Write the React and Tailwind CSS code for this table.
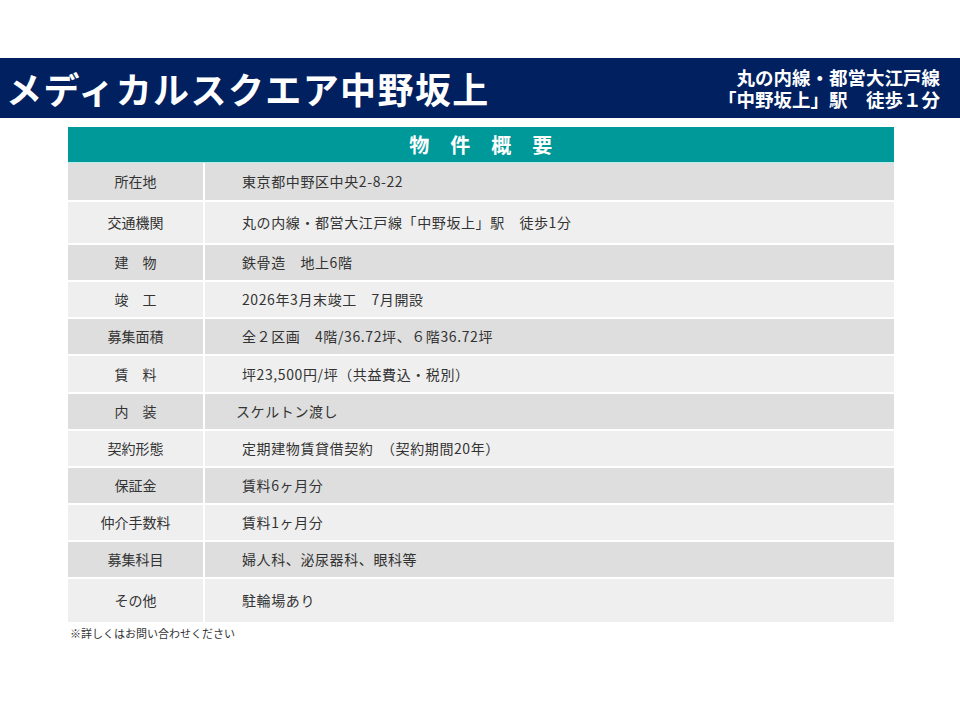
const ROWS = [
  { label: '所在地', value: '東京都中野区中央2-8-22', h: 'h-[37px]' },
  { label: '交通機関', value: '丸の内線・都営大江戸線「中野坂上」駅　徒歩1分', h: 'h-[43px]' },
  { label: '建　物', value: '鉄骨造　地上6階', h: 'h-[37px]' },
  { label: '竣　工', value: '2026年3月末竣工　7月開設', h: 'h-[37px]' },
  { label: '募集面積', value: '全２区画　4階/36.72坪、６階36.72坪', h: 'h-[37px]' },
  { label: '賃　料', value: '坪23,500円/坪（共益費込・税別）', h: 'h-[38px]' },
  { label: '内　装', value: 'スケルトン渡し', h: 'h-[37px]', shift: true },
  { label: '契約形態', value: '定期建物賃貸借契約　（契約期間20年）', h: 'h-[37px]' },
  { label: '保証金', value: '賃料6ヶ月分', h: 'h-[37px]' },
  { label: '仲介手数料', value: '賃料1ヶ月分', h: 'h-[37px]' },
  { label: '募集科目', value: '婦人科、泌尿器科、眼科等', h: 'h-[37px]' },
  { label: 'その他', value: '駐輪場あり', h: 'h-[45px]' },
]

const FONT = { fontFamily: '"Noto Sans CJK JP", "Noto Sans", sans-serif' }

export default function App() {
  return (
    <div className="w-[960px] h-[720px] bg-white" style={FONT}>
      <div className="h-[58px]" />
      {/* タイトルバー */}
      <header className="h-[60px] bg-[#002060] flex items-center justify-between pl-[6px] pr-[20px]">
        <h1 className="text-white font-bold text-[36px] leading-none tracking-[1.4px]">
          メディカルスクエア中野坂上
        </h1>
        <div className="text-white font-bold text-[18.5px] leading-[22px] text-right">
          <div>丸の内線・都営大江戸線</div>
          <div>「中野坂上」駅　徒歩１分</div>
        </div>
      </header>

      <section className="ml-[68px] w-[826px] mt-[9px]">
        <div className="h-[35px] bg-[#009999] flex items-center justify-center text-white font-bold text-[20px] leading-none tracking-[0.5px]">
          物　件　概　要
        </div>
        <div className="h-px bg-[#b8ecec]" />
        {ROWS.map((r, i) => (
          <div
            key={r.label}
            className={`flex ${r.h} ${i > 0 ? 'border-t-2 border-white' : ''} ${
              i % 2 === 0 ? 'bg-[#dedede]' : 'bg-[#efefef]'
            } text-[14px] text-[#333333]`}
          >
            <div className="w-[137px] border-r-2 border-white flex items-center justify-center">
              {r.label}
            </div>
            <div className={`flex-1 flex items-center tracking-[0.6px] ${r.shift ? 'pl-[31px]' : 'pl-[37px]'}`}>
              {r.value}
            </div>
          </div>
        ))}
        <p className="mt-[3px] ml-[2px] text-[11px] text-[#333333]">※詳しくはお問い合わせください</p>
      </section>
    </div>
  )
}
